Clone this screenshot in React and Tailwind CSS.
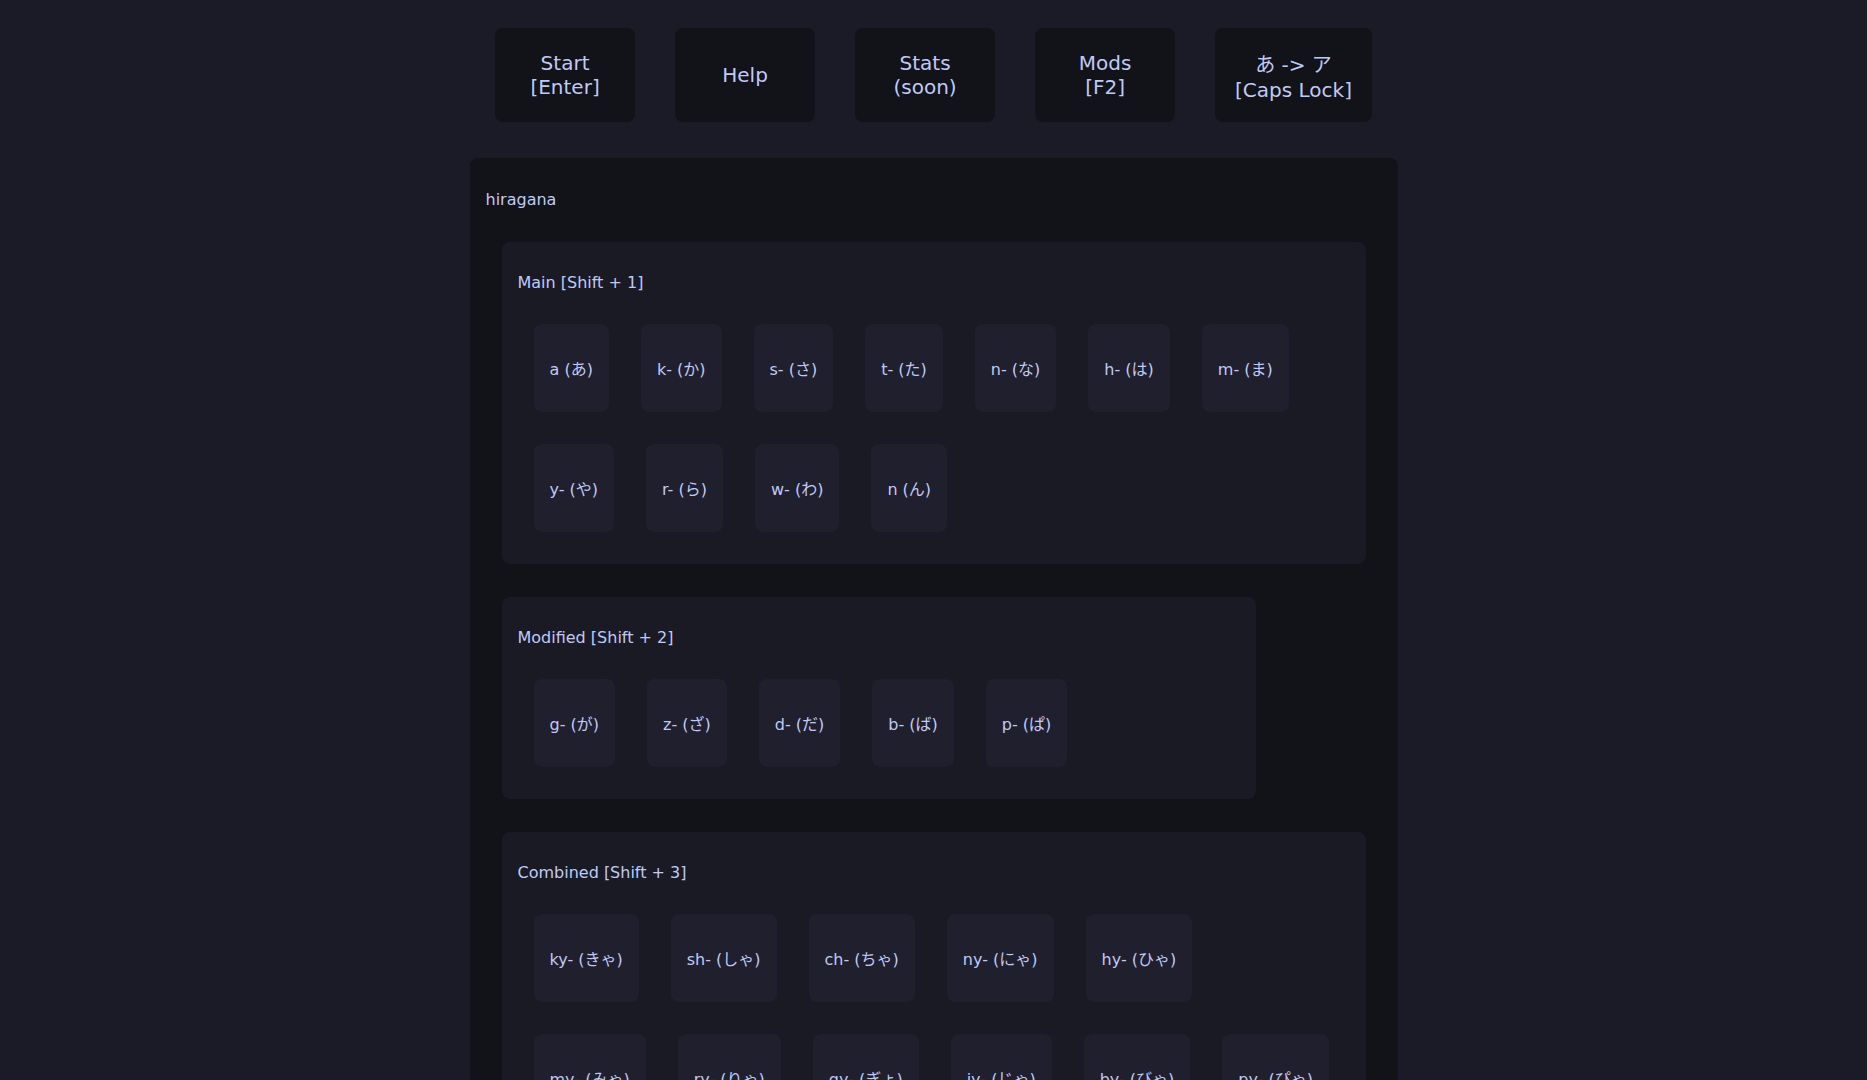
const NAV = [
  ['Start', '[Enter]'],
  ['Help'],
  ['Stats', '(soon)'],
  ['Mods', '[F2]'],
  ['あ -> ア', '[Caps Lock]'],
];

const SECTIONS = [
  {
    title: 'Main [Shift + 1]',
    rows: [
      ['a (あ)', 'k- (か)', 's- (さ)', 't- (た)', 'n- (な)', 'h- (は)', 'm- (ま)'],
      ['y- (や)', 'r- (ら)', 'w- (わ)', 'n (ん)'],
    ],
  },
  {
    title: 'Modified [Shift + 2]',
    narrow: true,
    rows: [['g- (が)', 'z- (ざ)', 'd- (だ)', 'b- (ば)', 'p- (ぱ)']],
  },
  {
    title: 'Combined [Shift + 3]',
    rows: [
      ['ky- (きゃ)', 'sh- (しゃ)', 'ch- (ちゃ)', 'ny- (にゃ)', 'hy- (ひゃ)'],
      ['my- (みゃ)', 'ry- (りゃ)', 'gy- (ぎょ)', 'jy- (じゃ)', 'by- (びゃ)', 'py- (ぴゃ)'],
    ],
  },
];

function Section({ section }) {
  return (
    <div className={`bg-[#1a1a25] rounded-lg pt-[29px] px-4 pb-4 ${section.narrow ? 'w-[754px]' : 'w-full'}`}>
      <div className="text-base leading-6">{section.title}</div>
      <div className="mt-[13px] flex flex-col">
        {section.rows.map((row, i) => (
          <div key={i} className="flex">
            {row.map(k => (
              <div key={k} className="m-4 h-[88px] px-4 flex items-center justify-center leading-[normal] text-base rounded-lg bg-[#1f1f2d] whitespace-nowrap">
                {k}
              </div>
            ))}
          </div>
        ))}
      </div>
    </div>
  );
}

export default function App() {
  return (
    <div
      className="min-h-screen bg-[#1a1b26] text-[#c0caf5] pt-[28px] flex flex-col items-center"
      style={{ fontFamily: '"DejaVu Sans", "Noto Sans CJK JP", sans-serif' }}
    >
      {/* Top nav */}
      <div className="flex items-start gap-10">
        {NAV.map((lines, i) => (
          <button
            key={i}
            className="min-w-[140px] h-[94px] px-5 rounded-lg bg-[#121219] text-[20px] leading-[normal] text-center text-[#c0caf5] flex flex-col items-center justify-center whitespace-nowrap"
          >
            {lines.map(l => <span key={l}>{l}</span>)}
          </button>
        ))}
      </div>

      {/* Kana panel */}
      <div className="mt-9 w-[928px] flex-1 bg-[#121219] rounded-t-lg pt-[30px] px-4 pb-8">
        <div className="text-base leading-6">hiragana</div>
        <div className="px-4 pt-[30px] flex flex-col items-start gap-[33px]">
          {SECTIONS.map(s => <Section key={s.title} section={s} />)}
        </div>
      </div>
    </div>
  );
}
